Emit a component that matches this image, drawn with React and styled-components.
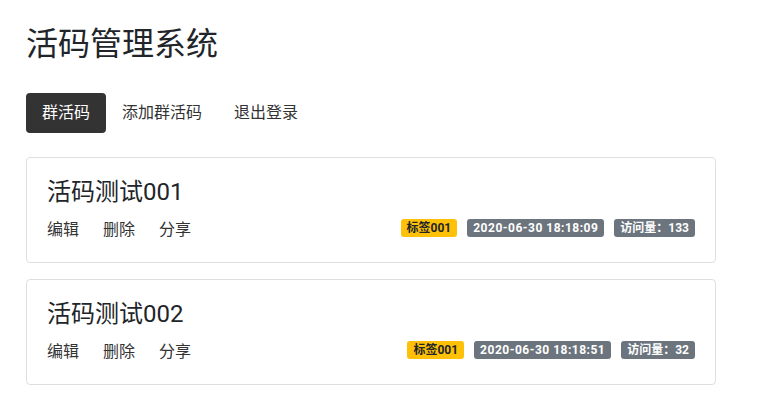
import React from 'react';
import styled, { createGlobalStyle } from 'styled-components';

const GlobalStyle = createGlobalStyle`
  html, body {
    margin: 0;
    padding: 0;
    background: #ffffff;
  }
  body {
    font-family: "Segoe UI", Roboto, "Noto Sans CJK SC", sans-serif;
    color: #212529;
  }
`;

const codes = [
  { id: 1, name: '活码测试001', tag: '标签001', time: '2020-06-30 18:18:09', views: 133 },
  { id: 2, name: '活码测试002', tag: '标签001', time: '2020-06-30 18:18:51', views: 32 },
];

function App() {
  return (
    <Page>
      <GlobalStyle />
      <Title>活码管理系统</Title>
      <Nav>
        <NavItem active>群活码</NavItem>
        <NavItem>添加群活码</NavItem>
        <NavItem>退出登录</NavItem>
      </Nav>
      <List>
        {codes.map((item) => (
          <Card key={item.id}>
            <CardTitle>{item.name}</CardTitle>
            <CardFooter>
              <Actions>
                <Action>编辑</Action>
                <Action>删除</Action>
                <Action>分享</Action>
              </Actions>
              <Badges>
                <Badge variant="warning">{item.tag}</Badge>
                <Badge spaced>{item.time}</Badge>
                <Badge>访问量：{item.views}</Badge>
              </Badges>
            </CardFooter>
          </Card>
        ))}
      </List>
    </Page>
  );
}

const Page = styled.div`
  width: 690px;
  padding: 25px 0 0 26px;
`;

const Title = styled.h1`
  margin: 0 0 30px;
  font-size: 32px;
  font-weight: 400;
  line-height: 38px;
  color: #212529;
`;

const Nav = styled.div`
  display: flex;
  margin-bottom: 24px;
`;

const NavItem = styled.div`
  padding: 8px 16px;
  font-size: 16px;
  line-height: 24px;
  border-radius: 4px;
  background-color: ${(p) => (p.active ? '#333333' : 'transparent')};
  color: ${(p) => (p.active ? '#ffffff' : '#333333')};
`;

const List = styled.div`
  display: flex;
  flex-direction: column;
  gap: 16px;
`;

const Card = styled.div`
  border: 1px solid #dfdfdf;
  border-radius: 4px;
  padding: 20px;
`;

const CardTitle = styled.div`
  font-size: 24px;
  line-height: 29px;
  color: #212529;
  margin-bottom: 11px;
`;

const CardFooter = styled.div`
  display: flex;
  align-items: center;
  justify-content: space-between;
`;

const Actions = styled.div`
  display: flex;
  gap: 24px;
`;

const Action = styled.span`
  font-size: 16px;
  line-height: 24px;
  color: #333333;
`;

const Badges = styled.div`
  display: flex;
  gap: 10px;
  margin-top: -5px;
`;

const Badge = styled.span`
  display: inline-block;
  padding: 2px 6px;
  font-size: 12px;
  font-weight: 700;
  line-height: 14px;
  letter-spacing: ${(p) => (p.spaced ? '0.5px' : 'normal')};
  border-radius: 3px;
  white-space: nowrap;
  background-color: ${(p) => (p.variant === 'warning' ? '#ffc107' : '#6c757d')};
  color: ${(p) => (p.variant === 'warning' ? '#212529' : '#ffffff')};
`;

export default App;
